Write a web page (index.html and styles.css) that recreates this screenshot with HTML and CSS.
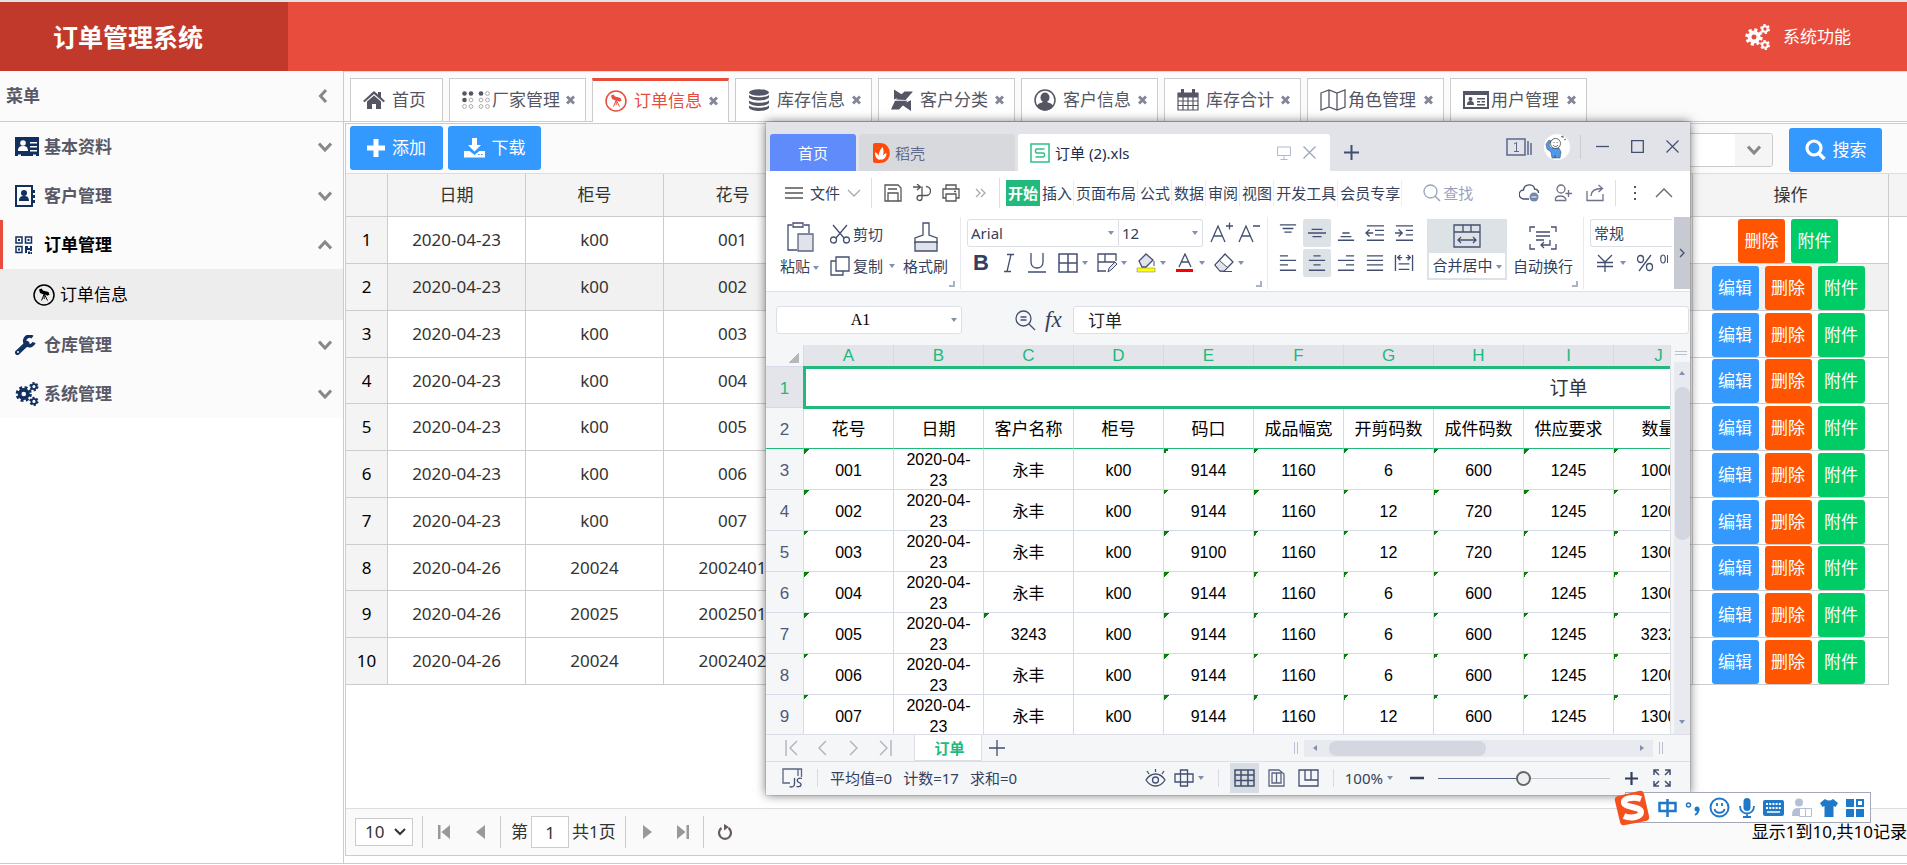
FILE: index.html
```html
<!DOCTYPE html>
<html lang="zh-CN">
<head>
<meta charset="utf-8">
<title>订单管理系统</title>
<link rel="stylesheet" href="styles.css">
</head>
<body>
<svg class="defs" aria-hidden="true">
  <symbol id="gears" viewBox="0 0 24 26">
    <circle cx="8.500" cy="13" r="4.500" fill="none" stroke="currentColor" stroke-width="4"/>
    <circle cx="8.500" cy="13" r="7" fill="none" stroke="currentColor" stroke-width="3.500" stroke-dasharray="3 2.500"/>
    <circle cx="19.500" cy="5" r="2.700" fill="none" stroke="currentColor" stroke-width="2"/>
    <circle cx="19.500" cy="5" r="4" fill="none" stroke="currentColor" stroke-width="2" stroke-dasharray="2.200 2"/>
    <circle cx="19.500" cy="21" r="2.700" fill="none" stroke="currentColor" stroke-width="2"/>
    <circle cx="19.500" cy="21" r="4" fill="none" stroke="currentColor" stroke-width="2" stroke-dasharray="2.200 2"/>
  </symbol>
  <symbol id="chev" viewBox="0 0 14 10"><path d="M1 1.500 7 8 13 1.500" fill="none" stroke="#888" stroke-width="3"/></symbol>
  <symbol id="scope" viewBox="0 0 22 22">
    <circle cx="11" cy="11" r="10" fill="none" stroke="currentColor" stroke-width="1.500"/>
    <path d="M6 5.500 8.500 4.500 10 6.500l5.500 1.500 1 2.500-2 1.200-2-1-2-.2-3.500-1.500z" fill="currentColor"/>
    <path d="M11 10.500 8.500 16.500M11.500 10.500l3 6M11.200 10v5" fill="none" stroke="currentColor"/>
  </symbol>
  <symbol id="close" viewBox="0 0 9 10"><path d="M1 1.500 8 8.500M8 1.500 1 8.500" stroke="#84879a" stroke-width="3"/></symbol>
</svg>
<div class="app">
  <header class="top">
    <h1 class="brand">订单管理系统</h1>
    <button class="sysmenu" type="button"><svg width="25" height="26"><use href="#gears"/></svg>系统功能</button>
  </header>
  <div class="body">
    <aside class="side">
      <div class="side-head">菜单<svg width="10" height="14" viewBox="0 0 10 14"><path d="M8 1 2.500 7 8 13" fill="none" stroke="#888" stroke-width="3"/></svg></div>
      <nav class="menu">
        <a class="item" href="#"><svg width="24" height="20" viewBox="0 0 24 20"><path fill="#12305f" d="M0 0h24v19h-3v-1.500h-3V19H6v-1.500H3V19H0z"/><circle cx="8" cy="6" r="2.800" fill="#fff"/><path fill="#fff" d="M3 14c0-4 2-5 5-5s5 1 5 5zM15 5h7v1.500h-7zM15 9h7v1.500h-7zM15 13h7v1.500h-7z"/></svg><span>基本资料</span><svg class="arr"><use href="#chev"/></svg></a>
        <a class="item" href="#"><svg width="24" height="22" viewBox="0 0 24 22"><path fill="none" stroke="#12305f" stroke-width="2" d="M1 1h16v20H1z"/><circle cx="9" cy="8" r="3" fill="#12305f"/><path fill="#12305f" d="M4 16c0-4 2-5 5-5s5 1 5 5zM18 5h2v3h-2zM18 10h2v3h-2zM18 15h2v3h-2z"/></svg><span>客户管理</span><svg class="arr"><use href="#chev"/></svg></a>
        <a class="item active" href="#"><svg width="24" height="18" viewBox="0 0 24 18"><g fill="none" stroke="#12305f" stroke-width="1.500"><path d="M1 1h6v6H1zM10.500 1h6v6h-6zM1 10.500h6v6H1z"/></g><path fill="#12305f" d="M3 3h2v2H3zM12.500 3h2v2h-2zM3 12.500h2v2H3zM10 10h3v2h2v-2h2v5h-2v-1h-3v3h-2zM13 15.500h2V18h-2zM15.500 16H17v2h-1.500z"/></svg><span>订单管理</span><svg class="arr up"><use href="#chev"/></svg></a>
        <a class="item sub" href="#"><svg width="22" height="22"><use href="#scope"/></svg><span>订单信息</span></a>
        <a class="item" href="#"><svg width="24" height="20" viewBox="0 0 24 20"><path d="M2.500 17.500 12 8.500" stroke="#12305f" stroke-width="5" stroke-linecap="round"/><path d="M17.500 2.200A4.800 4.800 0 1 0 19 7.500" fill="none" stroke="#12305f" stroke-width="3.500"/><circle cx="3" cy="17" r="1" fill="#fff"/></svg><span>仓库管理</span><svg class="arr"><use href="#chev"/></svg></a>
        <a class="item" href="#"><svg class="navy" width="24" height="24"><use href="#gears"/></svg><span>系统管理</span><svg class="arr"><use href="#chev"/></svg></a>
      </nav>
    </aside>
    <main class="main">
      <div class="tabs">
        <a class="tab home" href="#"><svg width="22" height="18" viewBox="0 0 22 18"><path fill="currentColor" d="M11 0 0 10l1.500 1.300L11 3l9.500 8.300L22 10l-4-3.700V1h-3v2.600zM4 10.500 11 4.500l7 6V18h-5v-5H9v5H4z"/></svg>首页</a>
        <a class="tab wide" href="#"><svg width="28" height="18" viewBox="0 0 28 18"><g fill="currentColor"><circle cx="2.500" cy="2.500" r="2.300"/><circle cx="9" cy="2.500" r="2.300"/><circle cx="2.500" cy="9" r="2.300"/><circle cx="19" cy="2.500" r="2.300"/></g><g fill="none" stroke="#aaa"><circle cx="9" cy="9" r="1.900"/><circle cx="2.500" cy="15.500" r="1.900"/><circle cx="9" cy="15.500" r="1.900"/><circle cx="25.500" cy="2.500" r="1.900"/><circle cx="19" cy="9" r="1.900"/><circle cx="25.500" cy="9" r="1.900"/><circle cx="19" cy="15.500" r="1.900"/><circle cx="25.500" cy="15.500" r="1.900"/></g></svg>厂家管理<svg class="x"><use href="#close"/></svg></a>
        <a class="tab on" href="#"><svg width="22" height="22"><use href="#scope"/></svg>订单信息<svg class="x"><use href="#close"/></svg></a>
        <a class="tab" href="#"><svg width="22" height="22" viewBox="0 0 22 22"><g fill="currentColor"><ellipse cx="11" cy="3.500" rx="10" ry="3.300"/><path d="M1 6c3 3 17 3 20 0v2.500c-3 4-17 4-20 0zM1 11.500c3 3 17 3 20 0V14c-3 4-17 4-20 0zM1 16.500c3 3 17 3 20 0V19c-3 4-17 4-20 0z"/></g></svg>库存信息<svg class="x"><use href="#close"/></svg></a>
        <a class="tab" href="#"><svg width="22" height="22" viewBox="0 0 22 22"><path fill="currentColor" d="M3 .5 12.500 6.500 3 10.500zM13.500 2.500H22L14.500 11 5 10.500zM0 20.500 4 11.800 16.500 11.800 8 20.500zM10.500 15.500 20 11.200V22z"/></svg>客户分类<svg class="x"><use href="#close"/></svg></a>
        <a class="tab" href="#"><svg width="22" height="22" viewBox="0 0 22 22"><circle cx="11" cy="11" r="10" fill="none" stroke="currentColor" stroke-width="1.500"/><ellipse cx="11" cy="8.500" rx="4.500" ry="5" fill="currentColor"/><path fill="currentColor" d="M3 17c1-3 4-3 6-4h4c2 1 5 1 6 4-4 6-12 6-16 0z"/></svg>客户信息<svg class="x"><use href="#close"/></svg></a>
        <a class="tab" href="#"><svg width="22" height="22" viewBox="0 0 22 22"><path fill="none" stroke="currentColor" stroke-width="1.200" d="M1 4h20v17H1zM1 12h20M1 16.500h20M6 8v13M11 8v13M16 8v13"/><path fill="currentColor" d="M1 4h20v4.500H1zM4 0h3v6H4zM15 0h3v6h-3z"/></svg>库存合计<svg class="x"><use href="#close"/></svg></a>
        <a class="tab wide" href="#"><svg width="26" height="22" viewBox="0 0 26 22"><path fill="none" stroke="currentColor" stroke-width="1.300" d="M1 4l8-3 8 3 8-3v17l-8 3-8-3-8 3zM9 1v17M17 4v17"/></svg>角色管理<svg class="x"><use href="#close"/></svg></a>
        <a class="tab wide" href="#"><svg width="26" height="18" viewBox="0 0 26 18"><path fill="none" stroke="currentColor" stroke-width="2" d="M1 1h24v16H1z"/><path fill="currentColor" d="M1 1h24v3H1zM4 14c0-3 1-4 3.500-4S11 11 11 14zM14 7h8v1.500h-8zM14 10h3v1.500h-3zM18.500 10H22v1.500h-3.500zM14 13h8v1.500h-8z"/><circle cx="7.500" cy="8" r="2" fill="currentColor"/></svg>用户管理<svg class="x"><use href="#close"/></svg></a>
      </div>
      <section class="panel">
        <div class="tools">
          <button class="btn" type="button"><svg width="18" height="18" viewBox="0 0 18 18"><path d="M9 0v18M0 9h18" stroke="#fff" stroke-width="5"/></svg>添加</button>
          <button class="btn" type="button"><svg width="21" height="20" viewBox="0 0 21 20"><path fill="#fff" d="M8 0h5v7h4l-6.500 6.500L4 7h4zM0 13h5.500l5 4 5-4H21v6.500H0z"/><path d="M14 16.500h1.500M17 16.500h1.500" stroke="#39f"/></svg>下载</button>
          <div class="search">
            <label class="combo"><select aria-label="筛选"><option></option></select><span><svg width="14" height="10"><use href="#chev"/></svg></span></label>
            <button class="btn" type="button"><svg width="21" height="21" viewBox="0 0 21 21"><circle cx="9" cy="9" r="7" fill="none" stroke="#fff" stroke-width="3.200"/><path d="M14 14.500 19.500 20" stroke="#fff" stroke-width="3.500"/></svg>搜索</button>
          </div>
        </div>
        <div class="list">
        <table class="grid">
          <colgroup><col class="c-no"><col class="c-d"><col class="c-d"><col class="c-d"><col><col class="c-op"><col class="c-gut"></colgroup>
          <thead><tr><th></th><th>日期</th><th>柜号</th><th>花号</th><th></th><th>操作</th><th class="gut"></th></tr></thead>
          <tbody>
          <tr><th>1</th><td>2020-04-23</td><td>k00</td><td>001</td><td></td><td class="ops"><button class="del">删除</button><button class="att">附件</button></td></tr>
          <tr class="hover"><th>2</th><td>2020-04-23</td><td>k00</td><td>002</td><td></td><td class="ops"><button class="edit">编辑</button><button class="del">删除</button><button class="att">附件</button></td></tr>
          <tr><th>3</th><td>2020-04-23</td><td>k00</td><td>003</td><td></td><td class="ops"><button class="edit">编辑</button><button class="del">删除</button><button class="att">附件</button></td></tr>
          <tr><th>4</th><td>2020-04-23</td><td>k00</td><td>004</td><td></td><td class="ops"><button class="edit">编辑</button><button class="del">删除</button><button class="att">附件</button></td></tr>
          <tr><th>5</th><td>2020-04-23</td><td>k00</td><td>005</td><td></td><td class="ops"><button class="edit">编辑</button><button class="del">删除</button><button class="att">附件</button></td></tr>
          <tr><th>6</th><td>2020-04-23</td><td>k00</td><td>006</td><td></td><td class="ops"><button class="edit">编辑</button><button class="del">删除</button><button class="att">附件</button></td></tr>
          <tr><th>7</th><td>2020-04-23</td><td>k00</td><td>007</td><td></td><td class="ops"><button class="edit">编辑</button><button class="del">删除</button><button class="att">附件</button></td></tr>
          <tr><th>8</th><td>2020-04-26</td><td>20024</td><td>2002401</td><td></td><td class="ops"><button class="edit">编辑</button><button class="del">删除</button><button class="att">附件</button></td></tr>
          <tr><th>9</th><td>2020-04-26</td><td>20025</td><td>2002501</td><td></td><td class="ops"><button class="edit">编辑</button><button class="del">删除</button><button class="att">附件</button></td></tr>
          <tr><th>10</th><td>2020-04-26</td><td>20024</td><td>2002402</td><td></td><td class="ops"><button class="edit">编辑</button><button class="del">删除</button><button class="att">附件</button></td></tr>
          </tbody>
        </table>
        </div>
        <footer class="pager">
          <label class="size"><select aria-label="每页条数"><option>10</option></select><svg width="12" height="8" viewBox="0 0 12 8"><path d="M1 1l5 5 5-5" fill="none" stroke="#333" stroke-width="2"/></svg></label>
          <i class="r"></i>
          <button type="button" aria-label="首页"><svg width="12" height="14" viewBox="0 0 12 14"><path fill="#999" d="M0 0h2.500v14H0zM12 0v14L3.500 7z"/></svg></button>
          <button type="button" aria-label="上一页"><svg width="12" height="14" viewBox="0 0 12 14"><path fill="#999" d="M11 0v14L2 7z"/></svg></button>
          <i></i>
          <label class="pg">第<input type="text" value="1"></label><span>共1页</span>
          <i class="r"></i>
          <button type="button" aria-label="下一页"><svg width="12" height="14" viewBox="0 0 12 14"><path fill="#999" d="M2 0v14l9-7z"/></svg></button>
          <button type="button" aria-label="末页"><svg width="12" height="14" viewBox="0 0 12 14"><path fill="#999" d="M0 0v14l8.500-7zM9.500 0H12v14H9.500z"/></svg></button>
          <i></i>
          <button type="button" aria-label="刷新"><svg width="16" height="16" viewBox="0 0 16 16"><path d="M4.500 4A6 6 0 1 0 11.500 4" fill="none" stroke="#665c5c" stroke-width="2.200"/><path fill="#665c5c" d="M7 0l5 3-5 3.500z"/></svg></button>
          <span class="total">显示1到10,共10记录</span>
        </footer>
      </section>
    </main>
  </div>

  <div class="win">
    <div class="wtitle">
      <a class="wt whome" href="#">首页</a>
      <a class="wt wdoc" href="#"><svg width="17" height="20" viewBox="0 0 17 20"><path fill="#ff4a0c" d="M2 0h5c13 0 13 20 0 20H2q-2 0-2-2V2q0-2 2-2z"/><path fill="#fff" d="M8 17C4 14 6 8 9.500 4c2 4 1 9-1.500 13zM7 17c-4-1-5-4-5-8 3 2 4.500 4 5 8zM8.500 17c0-3 2-6 5-7 0 4-2 6-5 7z"/></svg>稻壳</a>
      <div class="wt wact"><svg width="20" height="20" viewBox="0 0 20 20"><path fill="#fff" stroke="#2fbf87" stroke-width="1.500" d="M1 1h18v18H1z"/><path d="M14.500 6H7a1.500 1.500 0 0 0-1.500 1.500v1A1.500 1.500 0 0 0 7 10h6a1.500 1.500 0 0 1 1.500 1.500v1A1.500 1.500 0 0 1 13 14H5.500" fill="none" stroke="#2fbf87" stroke-width="1.500"/></svg>订单 (2).xls
        <svg class="push" width="14" height="14" viewBox="0 0 14 14"><path d="M.5 1h13v8.500H.5zM7 10v3M3.500 13.500h7" fill="none" stroke="#b0b9d0"/></svg><svg width="13" height="13" viewBox="0 0 13 13"><path d="M.5.5l12 12M12.500.5l-12 12" stroke="#98a3bd" stroke-width="1.200"/></svg></div>
      <button class="plus" type="button" aria-label="新建"><svg width="15" height="15" viewBox="0 0 15 15"><path d="M7.500 0v15M0 7.500h15" stroke="#434f70" stroke-width="2"/></svg></button>
      <div class="wctl">
        <svg class="wins" width="26" height="18" viewBox="0 0 26 18"><path d="M1 1h18v16H1zM22 3v14M25 5v12" fill="none" stroke="#5b688c" stroke-width="1.500"/><path d="M8 6l2.500-1.500v9M8 13.500h5" fill="none" stroke="#5b688c"/></svg>
        <svg class="ava" width="26" height="26" viewBox="0 0 26 26"><circle cx="13" cy="13" r="13" fill="#fff"/><path d="M8 14h7l2 4-1 6H8l-1-6-4-3-1-5 3-4 2 1-2 4 2 3z" fill="#4f97e8" stroke="#345" stroke-width=".5"/><circle cx="11.500" cy="9.500" r="5" fill="#fff" stroke="#444" stroke-width=".8"/><path d="M9 11c1.500 2 3.500 2 5 0M10 8v1M13 8v1M17 3l2-1v2M20 6l2-1M11 24v-3" fill="none" stroke="#444" stroke-width=".8"/></svg>
        <i></i>
        <button type="button" aria-label="最小化"><svg width="13" height="13" viewBox="0 0 13 13"><path d="M0 6.500h13" stroke="#434f70" stroke-width="1.300"/></svg></button>
        <button type="button" aria-label="最大化"><svg width="13" height="13" viewBox="0 0 13 13"><path d="M.7.700h11.600v11.600H.7z" fill="none" stroke="#434f70" stroke-width="1.300"/></svg></button>
        <button type="button" aria-label="关闭"><svg width="13" height="13" viewBox="0 0 13 13"><path d="M.5.500l12 12M12.500.5l-12 12" stroke="#434f70" stroke-width="1.200"/></svg></button>
      </div>
    </div>
    <div class="wmenu">
      <button class="file" type="button"><svg width="18" height="12" viewBox="0 0 18 12"><path d="M0 1h18M0 6h18M0 11h18" stroke="#555" stroke-width="1.300"/></svg>文件<svg class="fc" width="14" height="8" viewBox="0 0 14 8"><path d="M1 1l6 6 6-6" fill="none" stroke="#aaa" stroke-width="1.300"/></svg></button>
      <i class="v"></i>
      <div class="quick">
        <svg width="18" height="18" viewBox="0 0 18 18"><path d="M1 1h13l3 3v13H1zM4 17V9h10v8M4 5h9" fill="none" stroke="#555" stroke-width="1.300"/></svg>
        <svg width="18" height="18" viewBox="0 0 18 18"><path d="M0 3h7M4 0l3.500 3L4 6M9 11.500h4a4.500 4.500 0 0 0 0-9M9 2.500v12a2.500 2.500 0 1 1-2.500-3H9" fill="none" stroke="#555" stroke-width="1.300"/></svg>
        <svg width="18" height="18" viewBox="0 0 18 18"><path d="M4 5V1h10v4M4 14H1V5h16v9h-3M4 10h10v7H4zM12 7.500h2" fill="none" stroke="#555" stroke-width="1.300"/></svg>
        <svg width="18" height="18" viewBox="0 0 18 18"><path d="M5 5l4 4-4 4M10 5l4 4-4 4" fill="none" stroke="#aaa" stroke-width="1.300"/></svg>
      </div>
      <i class="v"></i>
      <nav class="mt"><a class="sel" href="#">开始</a><a href="#">插入</a><a href="#">页面布局</a><a href="#">公式</a><a href="#">数据</a><a href="#">审阅</a><a href="#">视图</a><a href="#">开发工具</a><a href="#">会员专享</a></nav>
      <button class="find" type="button"><svg width="18" height="18" viewBox="0 0 18 18"><circle cx="7.500" cy="7.500" r="6.500" fill="none" stroke="#98a3bd" stroke-width="1.300"/><path d="M12 12l5 5" stroke="#98a3bd" stroke-width="1.500"/></svg>查找</button>
      <div class="mr">
        <svg width="21" height="18" viewBox="0 0 21 18"><path d="M10 15H5a4.500 4.500 0 0 1-.5-9C5-.5 15-.8 15.500 5c2.500.3 4 2 4 4" fill="none" stroke="#434f70" stroke-width="1.300"/><circle cx="15" cy="13" r="4.500" fill="#7687ad"/><path d="M12.500 13h5" stroke="#fff"/></svg>
        <svg width="18" height="18" viewBox="0 0 18 18"><circle cx="7" cy="5" r="4" fill="none" stroke="#6b7386" stroke-width="1.300"/><path d="M12 16.500H1.500c-2-6 11-6 10.500 0M14.500 6v7M11.500 9.500H18" fill="none" stroke="#6b7386" stroke-width="1.300"/></svg>
        <svg width="18" height="18" viewBox="0 0 18 18"><path d="M1 7v9.500h16V10M5 12c0-5 4-7.500 11-7.500M12.500 1 16.500 4.500 12.500 8" fill="none" stroke="#6b7386" stroke-width="1.300"/></svg>
        <i class="v"></i>
        <svg width="4" height="16" viewBox="0 0 4 16"><path d="M1 1h2v2H1zM1 7h2v2H1zM1 13h2v2H1z" fill="#555"/></svg>
        <svg class="fold" width="18" height="10" viewBox="0 0 18 10"><path d="M1 9l8-8 8 8" fill="none" stroke="#666" stroke-width="1.300"/></svg>
      </div>
    </div>
    <div class="ribbon">
      <div class="g g1">
        <button class="big" type="button"><svg width="28" height="30" viewBox="0 0 28 30"><path d="M6 3H2v25h9M18 3h5v8M7 1h10v4H7z" fill="none" stroke="#434f70" stroke-width="1.300"/><path d="M12 12h15v17H12z" fill="#e0e3ea" stroke="#5b6580" stroke-width="1.300"/></svg><span>粘贴<b class="dd"></b></span></button>
        <div class="stack">
          <button type="button"><svg width="20" height="20" viewBox="0 0 20 20"><path d="M3 1l11 13M17 1 6 14" stroke="#434f70" stroke-width="1.300"/><circle cx="3.500" cy="16" r="3" fill="none" stroke="#434f70" stroke-width="1.300"/><circle cx="16.500" cy="16" r="3" fill="none" stroke="#434f70" stroke-width="1.300"/></svg>剪切</button>
          <button type="button"><svg width="20" height="20" viewBox="0 0 20 20"><path d="M6 5H1v14h12v-4" fill="#fff" stroke="#434f70" stroke-width="1.300"/><path d="M6 1h13v14H6z" fill="#fff" stroke="#434f70" stroke-width="1.300"/></svg>复制<b class="dd"></b></button>
        </div>
        <button class="big brush" type="button"><svg width="24" height="30" viewBox="0 0 24 30"><path d="M9 1h6v12l8 3v5H1v-5l8-3z" fill="#fff" stroke="#434f70" stroke-width="1.300"/><path d="M1 20h22v9H1z" fill="#e0e3ea" stroke="#434f70" stroke-width="1.300"/></svg><span>格式刷</span></button>
        <s class="corner"></s>
      </div>
      <div class="g g2">
        <div class="row">
          <label class="fsel f1"><select aria-label="字体"><option>Arial</option></select><b class="dd"></b></label><label class="fsel f2"><select aria-label="字号"><option>12</option></select><b class="dd"></b></label>
          <svg class="aa" width="24" height="22" viewBox="0 0 24 22"><path d="M1 20 8 4l7 16M3.500 14h9M16 4h7M19.500.5v7" fill="none" stroke="#434f70" stroke-width="1.300"/></svg>
          <svg width="24" height="22" viewBox="0 0 24 22"><path d="M1 20 8 4l7 16M3.500 14h9M15 4h7" fill="none" stroke="#434f70" stroke-width="1.300"/></svg>
        </div>
        <div class="row fmt">
          <button class="b" type="button">B</button>
          <button type="button"><svg width="20" height="20" viewBox="0 0 20 20"><path d="M8 1.500h7M5 18.500h7M12 1.500l-4 17" stroke="#434f70" stroke-width="1.300"/></svg></button>
          <button type="button"><svg width="20" height="20" viewBox="0 0 20 20"><path d="M4 0v9c0 8 12 8 12 0V0M1 19h18" fill="none" stroke="#434f70" stroke-width="1.300"/></svg></button>
          <span class="wide first"><svg width="20" height="20" viewBox="0 0 20 20"><path d="M1 1h18v18H1zM10 1v18M1 10h18" fill="none" stroke="#434f70" stroke-width="1.500"/></svg><b class="dd"></b></span>
          <span class="wide"><svg width="20" height="20" viewBox="0 0 20 20"><path d="M19 8V1H1v18M1 9h17M8 1v8M1 18h8" fill="none" stroke="#434f70" stroke-width="1.300"/><path d="M11 19l1-4 6-6 2 2-6 6z" fill="#e0e3ea" stroke="#434f70"/></svg><b class="dd"></b></span>
          <span class="wide"><svg width="20" height="20" viewBox="0 0 20 20"><path d="M3 8 10 1l7 6-7 7H6z" fill="#e0e3ea" stroke="#434f70" stroke-width="1.300"/><path d="M18 8v5" stroke="#434f70"/><path d="M1 15h18v4H1z" fill="#ff0" stroke="#777" stroke-width=".5"/></svg><b class="dd"></b></span>
          <span class="wide"><svg width="20" height="20" viewBox="0 0 20 20"><path d="M4 14 10 1l6 13M6 9h8" fill="none" stroke="#434f70" stroke-width="1.300"/><path d="M1 16h17v3H1z" fill="red"/></svg><b class="dd"></b></span>
          <span class="wide"><svg width="20" height="20" viewBox="0 0 20 20"><path d="M1 12 11 1l8 8-9 9H6z" fill="#fff" stroke="#434f70" stroke-width="1.300"/><path d="M5.500 7.500l8 7L10 18H6l-5-6z" fill="#e0e3ea" stroke="#434f70"/><path d="M9 18.500h9" stroke="#434f70"/></svg><b class="dd"></b></span>
        </div>
        <s class="corner"></s>
      </div>
      <div class="g g3">
        <div class="al">
          <button type="button"><svg viewBox="0 0 20 20"><path d="M1 1h18M4 5h12M6 9h8"/></svg></button>
          <button class="p" type="button"><svg viewBox="0 0 20 20"><path d="M4 6h12M0 10h20M5 14h10"/></svg></button>
          <button type="button"><svg viewBox="0 0 20 20"><path d="M6 10h8M4 14h12M1 18h18"/></svg></button>
          <button type="button"><svg viewBox="0 0 20 20"><path d="M1 2h19M10 7h10M10 12h10M1 18h19M8 10H0M4 6l-4 4 4 4"/></svg></button>
          <button type="button"><svg viewBox="0 0 20 20"><path d="M1 2h19M12 7h8M12 12h8M1 18h19M0 10h8M4 6l4 4-4 4"/></svg></button>
          <button type="button"><svg viewBox="0 0 20 20"><path d="M1 2h9M1 7h18M1 12h9M1 18h18"/></svg></button>
          <button class="p" type="button"><svg viewBox="0 0 20 20"><path d="M6 2h8M1 7h18M6 12h8M1 18h18"/></svg></button>
          <button type="button"><svg viewBox="0 0 20 20"><path d="M10 2h9M1 7h18M10 12h9M1 18h18"/></svg></button>
          <button type="button"><svg viewBox="0 0 20 20"><path d="M1 2h18M1 7h18M1 12h18M1 18h18"/></svg></button>
          <button type="button"><svg viewBox="0 0 20 20"><path d="M.5 1v18M19.500 1v18M3 4h5M6 1 3 4l3 3M12 4h5M14 1l3 3-3 3M4 11h12M4 17h12"/></svg></button>
        </div>
        <button class="merge" type="button"><span class="mi"><svg width="28" height="24" viewBox="0 0 28 24"><path d="M1 1h26v22H1zM1 8h26M10 1v7M18 1v7M5 16h18M8 13l-3 3 3 3M20 13l3 3-3 3" fill="none" stroke="#434f70" stroke-width="1.300"/></svg></span><span class="ml">合并居中<b class="dd"></b></span></button>
        <button class="wrap" type="button"><svg width="28" height="24" viewBox="0 0 28 24"><path d="M1 6V1h5M22 1h5v5M1 18v5h5M22 23h5v-5M7 6h14M7 10h14M7 14h8M21 14v5h-9M15 16l-3 3 3 3" fill="none" stroke="#434f70" stroke-width="1.300"/></svg><span>自动换行</span></button>
        <s class="corner"></s>
      </div>
      <div class="g4">
        <label class="nsel"><select aria-label="数字格式"><option>常规</option></select></label>
        <div class="num"><svg width="18" height="18" viewBox="0 0 18 18"><path d="M2 1l7 7 7-7M9 8v10M1 8.500h16M1 12.500h16" fill="none" stroke="#434f70" stroke-width="1.300"/></svg><b class="dd"></b><svg class="pc" width="18" height="18" viewBox="0 0 18 18"><ellipse cx="4.500" cy="5" rx="3" ry="3.500" fill="none" stroke="#434f70" stroke-width="1.300"/><ellipse cx="13.500" cy="13" rx="3" ry="3.500" fill="none" stroke="#434f70" stroke-width="1.300"/><path d="M15 1 3 17" stroke="#434f70" stroke-width="1.300"/></svg><svg width="8" height="18" viewBox="0 0 8 18"><ellipse cx="3" cy="5" rx="2.300" ry="4" fill="none" stroke="#434f70" stroke-width="1.200"/><path d="M7.500 1v8" stroke="#434f70"/></svg></div>
      </div>
      <button class="more" type="button" aria-label="更多"><svg width="6" height="10" viewBox="0 0 6 10"><path d="M1 1l4 4-4 4" fill="none" stroke="#434f70" stroke-width="1.300"/></svg></button>
    </div>
    <div class="fx">
      <div class="name"><input type="text" value="A1" aria-label="名称框"><b class="dd"></b></div>
      <svg class="fi" width="21" height="21" viewBox="0 0 21 21"><circle cx="8.500" cy="8.500" r="7.500" fill="none" stroke="#434f70" stroke-width="1.300"/><path d="M14 14l6 6M5.500 7h6M5.500 10h6" stroke="#434f70" stroke-width="1.300"/></svg>
      <em>fx</em>
      <input class="formula" type="text" value="订单" aria-label="编辑栏">
    </div>
    <div class="sheet">
      <div class="cells">
        <table class="xl">
          <colgroup><col class="rh"><col span="17"></colgroup>
          <thead><tr><th class="cor"></th><th>A</th><th>B</th><th>C</th><th>D</th><th>E</th><th>F</th><th>G</th><th>H</th><th>I</th><th>J</th></tr></thead>
          <tbody>
          <tr class="r1"><th>1</th><td colspan="17">订单</td></tr>
          <tr class="r2"><th>2</th><td>花号</td><td>日期</td><td>客户名称</td><td>柜号</td><td>码口</td><td>成品幅宽</td><td>开剪码数</td><td>成件码数</td><td>供应要求</td><td>数量</td></tr>
          <tr><th>3</th><td class="e">001</td><td><div>2020-04-23</div></td><td>永丰</td><td>k00</td><td class="e">9144</td><td class="e">1160</td><td class="e">6</td><td class="e">600</td><td class="e">1245</td><td class="e">1000</td></tr>
          <tr><th>4</th><td class="e">002</td><td><div>2020-04-23</div></td><td>永丰</td><td>k00</td><td class="e">9144</td><td class="e">1160</td><td class="e">12</td><td class="e">720</td><td class="e">1245</td><td class="e">1200</td></tr>
          <tr><th>5</th><td class="e">003</td><td><div>2020-04-23</div></td><td>永丰</td><td>k00</td><td class="e">9100</td><td class="e">1160</td><td class="e">12</td><td class="e">720</td><td class="e">1245</td><td class="e">1300</td></tr>
          <tr><th>6</th><td class="e">004</td><td><div>2020-04-23</div></td><td>永丰</td><td>k00</td><td class="e">9144</td><td class="e">1160</td><td class="e">6</td><td class="e">600</td><td class="e">1245</td><td class="e">1300</td></tr>
          <tr><th>7</th><td class="e">005</td><td><div>2020-04-23</div></td><td class="e">3243</td><td>k00</td><td class="e">9144</td><td class="e">1160</td><td class="e">6</td><td class="e">600</td><td class="e">1245</td><td class="e">3232</td></tr>
          <tr><th>8</th><td class="e">006</td><td><div>2020-04-23</div></td><td>永丰</td><td>k00</td><td class="e">9144</td><td class="e">1160</td><td class="e">6</td><td class="e">600</td><td class="e">1245</td><td class="e">1200</td></tr>
          <tr><th>9</th><td class="e">007</td><td><div>2020-04-23</div></td><td>永丰</td><td>k00</td><td class="e">9144</td><td class="e">1160</td><td class="e">12</td><td class="e">600</td><td class="e">1245</td><td class="e">1300</td></tr>
          </tbody>
        </table>
      </div>
      <div class="vs"><u></u><div class="vtrack"><b class="dd up"></b><div class="vthumb"></div><b class="dd end"></b></div></div>
    </div>
    <div class="sbar">
      <svg class="nav" width="108" height="16" viewBox="0 0 108 16"><path d="M1 0v16M12 1 5 8l7 7M41 1l-7 7 7 7M65 1l7 7-7 7M95 1l7 7-7 7M106 0v16" fill="none" stroke="#aaaeb6" stroke-width="1.300"/></svg>
      <a class="stab" href="#">订单</a>
      <svg width="16" height="16" viewBox="0 0 16 16"><path d="M8 0v16M0 8h16" stroke="#434f70" stroke-width="1.300"/></svg>
      <div class="hs"><u></u><div class="htrack"><b class="dd left"></b><div class="hthumb"></div><b class="dd right"></b></div><u></u></div>
    </div>
    <div class="stat">
      <svg width="21" height="20" viewBox="0 0 21 20"><path d="M8 15H1V1h15v7M16 1h3.500v8" fill="none" stroke="#5b6580" stroke-width="1.300"/><path d="M12.500 10v6c0 3-3 3.500-5 2.500M20 10.500c-5-1.500-6 3-3 4s3 5-2.500 4" fill="none" stroke="#434f70" stroke-width="1.300"/></svg>
      <i></i>
      <span class="sum"><span>平均值=0</span><span>计数=17</span><span>求和=0</span></span>
      <div class="sr">
        <svg width="21" height="18" viewBox="0 0 21 18"><path d="M1 11c5-8 14-8 19 0-5 8-14 8-19 0zM10.500 0v3M2 2l2 3M19 2l-2 3" fill="none" stroke="#434f70" stroke-width="1.300"/><circle cx="10.500" cy="11" r="3" fill="none" stroke="#434f70" stroke-width="1.300"/></svg>
        <svg class="m8" width="20" height="18" viewBox="0 0 20 18"><path d="M1 5h18v8H1zM6.500 1h7v16h-7z" fill="none" stroke="#434f70" stroke-width="1.300"/></svg><b class="dd"></b>
        <i></i>
        <span class="pv"><svg width="21" height="18" viewBox="0 0 21 18"><path d="M1 1h19v16H1zM1 6h19M1 11.500h19M7 1v16M14 1v16" fill="none" stroke="#434f70" stroke-width="1.500"/></svg></span>
        <svg class="m9" width="17" height="18" viewBox="0 0 17 18"><path d="M1 1h10l5 4v12H1zM4 4h4.500v10H4zM8.500 4H13v10H8.500" fill="none" stroke="#5b6580" stroke-width="1.300"/></svg>
        <svg class="m13" width="21" height="18" viewBox="0 0 21 18"><path d="M1 1h19v16H1zM7 1v10h13M13 1v10" fill="none" stroke="#434f70" stroke-width="1.300"/></svg>
        <i class="i2"></i>
        <span class="zoom">100%</span><b class="dd"></b>
        <svg class="mn" width="14" height="14" viewBox="0 0 14 14"><path d="M0 7h14" stroke="#333f5c" stroke-width="2.500"/></svg>
        <input type="range" min="0" max="200" value="99" aria-label="缩放">
        <svg class="mp" width="13" height="13" viewBox="0 0 13 13"><path d="M6.500 0v13M0 6.500h13" stroke="#333f5c" stroke-width="2.200"/></svg>
        <svg class="mp" width="18" height="18" viewBox="0 0 18 18"><path d="M1 6V1h5M1 1l5 5M12 1h5v5M17 1l-5 5M1 12v5h5M1 17l5-5M17 12v5h-5M17 17l-5-5" fill="none" stroke="#434f70" stroke-width="1.500"/></svg>
      </div>
    </div>
  </div>

  <div class="ime">
    <svg class="logo" width="36" height="36" viewBox="0 0 36 36"><path d="M4 6 25 1q4-1 5 3l5 22q1 4-3 5L11 35q-4 1-5-3L1 11q-1-4 3-5z" fill="#f4511e"/><path d="M27 9C18 6 9 9 10 13c1 5 17 3 17 9 0 5-10 7-17 4" fill="none" stroke="#fff" stroke-width="6"/></svg>
    <svg width="19" height="20" viewBox="0 0 19 20"><path d="M1.500 5h16v8h-16zM9.500 1v18" fill="none" stroke="#1f78c8" stroke-width="2.500"/></svg>
    <svg width="16" height="20" viewBox="0 0 16 20"><circle cx="3.500" cy="7" r="2" fill="none" stroke="#1f78c8" stroke-width="1.500"/><circle cx="12" cy="11" r="2.500" fill="#1f78c8"/><path d="M13.500 11q0 4-3.500 6" fill="none" stroke="#1f78c8" stroke-width="2"/></svg>
    <svg width="21" height="21" viewBox="0 0 21 21"><circle cx="10.500" cy="10.500" r="9" fill="none" stroke="#1f78c8" stroke-width="2"/><path d="M5.500 12c1 5 9 5 10 0M8 6v3M13 6v3" fill="none" stroke="#1f78c8" stroke-width="1.800"/></svg>
    <svg width="16" height="20" viewBox="0 0 16 20"><rect x="4.500" width="7" height="13" rx="3.500" fill="#1f78c8"/><path d="M1 8c0 10 14 10 14 0M8 15v4M4 19h8" fill="none" stroke="#1f78c8" stroke-width="1.800"/></svg>
    <svg width="21" height="16" viewBox="0 0 21 16"><rect width="21" height="16" rx="2" fill="#1f78c8"/><path d="M3 4h15M3 8h15" stroke="#fff" stroke-width="2" stroke-dasharray="2 1.200"/><path d="M4 12h13" stroke="#fff" stroke-width="1.500"/></svg>
    <svg width="20" height="20" viewBox="0 0 20 20"><circle cx="7" cy="4.500" r="4" fill="#b4bfd6"/><path d="M0 18c0-7 2-8 7-8s6 2 6 2v6z" fill="#b4bfd6"/><path d="M7.500 10.500h12v8h-12zM13.500 10.500v8" fill="#fff" stroke="#b4bfd6"/></svg>
    <svg width="18" height="18" viewBox="0 0 18 18"><path fill="#1f78c8" d="M5 0q4 3 8 0l5 4-2.500 4-2-1v11h-9V7l-2 1L0 4z"/></svg>
    <svg width="18" height="18" viewBox="0 0 18 18"><path fill="#1f78c8" d="M0 0h8v8H0zM0 10h8v8H0zM10 10h8v8h-8z"/><path d="M11 1h6v6h-6z" fill="none" stroke="#1f78c8" stroke-width="2"/></svg>
  </div>
</div>
</body>
</html>
```
FILE: styles.css
```css
* { box-sizing: border-box; }
body {
  margin: 0;
  font: 17px/24px "Noto Sans", "Noto Sans CJK SC", sans-serif;
  color: #333;
  background: #fff;
  overflow: hidden;
}
a { color: inherit; text-decoration: none; }
button { font: inherit; color: inherit; border: 0; background: none; padding: 0; white-space: nowrap; }
select, input { font: inherit; color: inherit; }
select { appearance: none; }
svg { flex: none; display: block; }
.defs { position: absolute; width: 0; height: 0; }

.app {
  position: relative;
  display: flex;
  flex-direction: column;
  height: 100vh;
  border-top: 2px solid #e2e2e2;
}
.top { display: flex; flex: none; height: 69px; background: #e84c3d; color: #fff; }
.brand {
  width: 288px;
  margin: 0;
  padding-left: 53px;
  background: #c1392b;
  font-size: 25px;
  line-height: 70px;
  font-weight: 700;
}
.sysmenu { display: flex; align-items: center; gap: 13px; margin-left: auto; padding-right: 56px; }
.body { display: flex; flex: 1; min-height: 0; margin-bottom: 1px; border-bottom: 1px solid #ccc; }

/* sidebar */
.side { width: 344px; flex: none; border-right: 1px solid #ccc; }
.side-head {
  display: flex;
  align-items: center;
  justify-content: space-between;
  height: 51px;
  padding: 0 15px 0 6px;
  border-bottom: 1px solid #ccc;
  background: #fbfbfb;
  color: #585866;
  font-weight: 700;
}
.menu { background: #fbfbfb; }
.item {
  display: flex;
  align-items: center;
  height: 49px;
  padding: 0 11px 0 12px;
  gap: 5px;
  border-left: 3px solid transparent;
  color: #585866;
  font-weight: 700;
}
.item.active { border-color: #e84c3d; color: #000; }
.item.sub { height: 51px; padding-left: 30px; background: #ededed; color: #000; font-weight: 400; }
.navy { color: #12305f; }
.arr { width: 14px; height: 10px; margin-left: auto; }
.arr.up { transform: rotate(180deg); }

/* tabs */
.main { display: flex; flex-direction: column; flex: 1; min-width: 0; border-top: 1px solid #ddd; }
.tabs {
  display: flex;
  flex: none;
  gap: 6px;
  height: 50px;
  padding: 6px 6px 0;
  border-bottom: 1px solid #ccc;
  background: #fbfbfb;
}
.tab {
  display: flex;
  align-items: center;
  gap: 7px;
  width: 137px;
  padding: 0 10px 0 12px;
  border: 1px solid #ccc;
  border-bottom: 0;
  background: #fff;
  color: #555664;
  white-space: nowrap;
}
.tab.home { width: 93px; }
.tab.wide { gap: 2px; }
.tab.on { border-top: 3px solid #e84c3d; color: #e84c3d; margin-bottom: -1px; padding-bottom: 2px; }
.tab .x { width: 9px; height: 10px; margin-left: auto; }

/* content panel */
.panel {
  display: flex;
  flex-direction: column;
  flex: 1;
  min-height: 0;
  margin: 1px 0 7px 1px;
  border: 1px solid #ccc;
  border-right: 0;
}
.tools { display: flex; flex: none; gap: 5px; height: 50px; padding: 2px 4px; border-bottom: 1px solid #ddd; background: #fbfbfb; }
.btn {
  display: flex;
  align-items: center;
  justify-content: center;
  gap: 7px;
  width: 93px;
  height: 44px;
  border-radius: 3px;
  background: #39f;
  color: #fff;
}
.search { display: flex; align-items: center; gap: 16px; margin-left: auto; padding: 2px 21px 0 0; }
.combo { display: flex; width: 260px; height: 34px; border: 1px solid #ccc; border-radius: 3px; background: #fff; overflow: hidden; }
.combo select { flex: 1; border: 0; background: none; }
.combo span { display: flex; align-items: center; justify-content: center; width: 37px; background: #f5f5f5; }
.list { flex: 1; min-height: 0; }
.grid { width: 100%; table-layout: fixed; border-spacing: 0; text-align: center; }
.c-no { width: 42px; }
.c-d { width: 138px; }
.c-op { width: 196px; }
.c-gut { width: 18px; }
.grid th, .grid td { padding: 0; border: solid #ccc; border-width: 0 1px 1px 0; font-weight: 400; }
.grid th { background: #f4f4f4; }
.grid thead th { height: 43px; }
.grid thead .gut { border-right: 0; }
.grid tbody th { color: #000; }
.grid tbody tr { height: 47px; }
.grid tbody tr:nth-child(4n) { height: 46px; }
.grid .hover td { background: #f1f1f1; }
.grid .ops { padding: 1px 5px 0 0; line-height: 0; }
.ops button { width: 47px; height: 44px; margin: 0 3px; border-radius: 3px; color: #fff; line-height: 24px; }
.edit { background: #39f; }
.del { background: #f50; }
.att { background: #0c6; }

.pager { display: flex; align-items: center; flex: none; height: 47px; padding-left: 9px; border-top: 1px solid #ddd; background: #fafafa; }
.size { position: relative; }
.size select { display: block; width: 58px; height: 28px; padding: 0 9px; border: 1px solid #ccc; background: #fff; line-height: 24px; }
.size svg { position: absolute; right: 7px; top: 10px; pointer-events: none; }
.pager i { width: 1px; height: 32px; margin: 0 3px 0 2px; background: #ccc; }
.pager .r { margin-left: 9px; }
.pager button { display: flex; justify-content: center; align-items: center; width: 36px; height: 32px; }
.pg { display: flex; align-items: center; gap: 3px; margin: 0 3px 0 7px; }
.pg input { width: 38px; height: 32px; padding: 0; border: 1px solid #ccc; background: #fff; text-align: center; }
.total { margin-left: auto; color: #000; }

/* spreadsheet window */
.win {
  position: absolute;
  left: 766px;
  top: 120px;
  display: flex;
  flex-direction: column;
  width: 924px;
  height: 673px;
  background: #f5f6f8;
  box-shadow: 0 0 10px rgba(0, 0, 0, .55), 0 0 1px #777;
  color: #333f5c;
  font-size: 15px;
  line-height: 20px;
}
.wtitle { display: flex; align-items: flex-end; height: 49px; padding-left: 4px; background: #e2e3e8; }
.wt { display: flex; align-items: center; gap: 5px; height: 37px; margin-right: 3px; border-radius: 3px 3px 0 0; white-space: nowrap; }
.whome { justify-content: center; width: 86px; background: #608cfb; color: #fff; }
.wdoc { width: 156px; padding-left: 14px; background: #d8d9dd; color: #5f6b8a; }
.wact { width: 312px; padding: 0 14px 0 12px; background: #fff; color: #222b45; }
.push { margin: 0 7px 0 auto; }
.plus { margin: 0 0 11px 11px; }
.wctl { display: flex; align-items: center; align-self: center; margin-left: auto; }
.wctl button { display: flex; justify-content: center; width: 35px; }
.wins { margin-right: 12px; }
.ava { margin-right: 10px; }
.wctl i { width: 1px; height: 24px; margin-right: 4px; background: #c9cbd3; }

.wmenu { display: flex; align-items: center; height: 44px; padding: 0 17px 0 19px; background: #fff; white-space: nowrap; }
.file { display: flex; align-items: center; gap: 7px; }
.v { width: 1px; height: 30px; margin-left: 10px; background: #dcdfe6; }
.quick { display: flex; gap: 11px; margin-left: 12px; }
.mt { display: flex; margin-left: 6px; }
.mt a { padding: 3px 1px 3px 2px; border-right: 1px solid #eceef2; }
.mt .sel { padding-right: 2px; border: 0; background: #21b97c; color: #fff; font-weight: 700; }
.find { display: flex; align-items: center; gap: 2px; margin-left: 21px; color: #98a3bd; }
.mr { display: flex; align-items: center; gap: 14px; margin-left: auto; }
.mr .v { height: 26px; margin: 0 3px 0 -3px; }
.fold { margin-left: 4px; }

.ribbon { display: flex; height: 77px; padding-top: 2px; border-bottom: 1px solid #dfe1e6; background: #fff; }
.g { position: relative; display: flex; height: 72px; padding-top: 2px; border-right: 1px solid #e8eaee; }
.corner { position: absolute; right: 5px; bottom: 2px; width: 6px; height: 6px; border: solid #a9b2c6; border-width: 0 2px 2px 0; }
.dd { display: inline-block; flex: none; width: 0; height: 0; border: 3px solid transparent; border-top: 4px solid #8290b0; border-bottom: 0; vertical-align: middle; margin-left: 3px; }
.g1 { width: 195px; padding-left: 14px; }
.big { display: flex; flex-direction: column; align-items: center; gap: 4px; height: 58px; padding-top: 3px; }
.brush { margin-left: 7px; }
.stack { display: flex; flex-direction: column; gap: 2px; width: 66px; margin-left: 11px; }
.stack button { display: flex; align-items: center; gap: 3px; height: 30px; }
.g2 { flex-direction: column; gap: 2px; width: 307px; padding-left: 6px; }
.row { display: flex; align-items: center; height: 28px; }
.fsel { display: flex; align-items: center; height: 28px; padding-right: 4px; border: 1px solid #dcdfe6; }
.fsel select, .nsel select { flex: 1; min-width: 0; padding: 0 3px; border: 0; background: none; }
.f1 { width: 152px; border-radius: 3px 0 0 3px; }
.f2 { width: 84px; border-left: 0; border-radius: 0 3px 3px 0; }
.aa { margin: 0 4px 0 7px; }
.fmt button { display: flex; justify-content: center; width: 28px; }
.fmt .b { font: 700 22px/28px "Liberation Sans", sans-serif; }
.fmt .wide { display: flex; align-items: center; gap: 1px; width: 39px; }
.fmt .first { margin-left: 7px; }
.g3 { width: 316px; padding-left: 6px; }
.al { display: grid; grid-template-columns: repeat(5, 28px); grid-auto-rows: 28px; gap: 2px 1px; }
.al button { display: flex; align-items: center; justify-content: center; border-radius: 2px; }
.al svg { width: 20px; height: 18px; fill: none; stroke: #434f70; stroke-width: 1.500; }
.al .p { background: #dde2e6; }
.merge { width: 80px; height: 61px; margin-left: 9px; padding: 0 2px 2px; background: #dde2e6; }
.mi { display: flex; justify-content: center; align-items: center; height: 34px; }
.ml { display: block; height: 25px; background: #fff; line-height: 24px; }
.wrap { display: flex; flex-direction: column; align-items: center; gap: 6px; height: 58px; margin-left: 6px; padding-top: 7px; }
.g4 { flex: 1; padding: 2px 0 0 6px; min-width: 0; overflow: hidden; }
.nsel { display: flex; height: 28px; margin-right: 2px; border: 1px solid #dcdfe6; border-right: 0; border-radius: 3px 0 0 3px; }
.num { display: flex; align-items: center; height: 32px; padding-left: 6px; gap: 3px; }
.pc { margin: 0 3px 0 7px; }
.more { display: flex; align-items: center; justify-content: center; width: 16px; height: 72px; background: #c8cad1; }

.fx { display: flex; align-items: center; height: 53px; padding: 3px 1px 0 10px; }
.name { display: flex; align-items: center; width: 186px; height: 28px; padding-right: 4px; border: 1px solid #dcdfe6; border-radius: 3px; background: #fff; }
.name input { flex: 1; min-width: 0; padding: 0 4px 0 0; border: 0; background: none; color: #000; font: 400 16px/24px "Liberation Serif", serif; text-align: center; }
.fi { margin: 0 9px 0 53px; }
.fx em { width: 28px; font: italic 23px/24px "Liberation Serif", serif; }
.formula { flex: 1; min-width: 0; height: 28px; padding: 0 14px 2px; border: 1px solid #dcdfe6; border-radius: 3px; background: #fff; color: #222; font: 17px/24px "Liberation Serif", "Noto Sans CJK SC", serif; }

.sheet { display: flex; flex: 1; min-height: 0; overflow: hidden; }
.cells { flex: 1; min-width: 0; overflow: hidden; background: #fff; }
.xl { width: 1568px; table-layout: fixed; border-spacing: 0; color: #000; text-align: center; font: 16px/22px "Liberation Sans", "Noto Sans CJK SC", sans-serif; }
.xl .rh { width: 38px; }
.xl th, .xl td { height: 41px; padding: 3px 0 0; border: solid #d4dae6; border-width: 0 1px 1px 0; font-weight: 400; }
.xl th { background: #f5f6f8; color: #4d5a7a; font-size: 17px; }
.xl thead th { height: 22px; padding: 1px 0 0; line-height: 20px; background: #e4e5ea; color: #21b97c; }
.xl thead .cor { background: linear-gradient(135deg, transparent 50%, #b5b7bb 50%) 22px 7px / 11px 11px no-repeat #f5f6f8; }
.xl .r1 th { background: #e4e5ea; color: #21b97c; }
.xl .r1 td { outline: 3px solid #21b97c; outline-offset: -2px; color: #333; font-size: 19px; }
.xl .r2 th, .xl .r2 td { border-bottom-color: #21b97c; }
.xl .r2 td { font-size: 17px; }
.xl .e { background: linear-gradient(135deg, #087f08 50%, transparent 50%) 0 0 / 5px 5px no-repeat; }
.xl div { height: 40px; margin-top: -4px; padding: 0 8px; line-height: 21px; }
.vs { display: flex; flex-direction: column; width: 20px; padding-left: 3px; border-left: 1px solid #dcdfe6; }
.vs u { height: 4px; margin: 6px 3px 7px 1px; border: solid #b9c1d3; border-width: 1px 0; }
.vtrack { display: flex; flex: 1; flex-direction: column; align-items: center; background: #e9eaef; }
.vtrack .dd { margin: 9px 0 12px; }
.dd.up { transform: rotate(180deg); }
.vtrack .end { margin: auto 0 10px; }
.vthumb { width: 15px; height: 153px; border-radius: 7px; background: #d4d7df; }

.sbar { display: flex; align-items: center; height: 27px; padding-left: 19px; border-top: 1px solid #dcdfe6; background: #f5f6f8; }
.stab { width: 68px; height: 26px; margin: 0 7px 0 21px; padding-left: 3px; border: solid #dcdfe6; border-width: 0 1px 1px; background: #fff; color: #21b97c; font-weight: 700; line-height: 26px; text-align: center; }
.hs { display: flex; align-items: center; gap: 6px; margin-left: auto; padding-right: 27px; }
.hs u { width: 4px; height: 12px; border: solid #b9c1d3; border-width: 0 1px; }
.htrack { display: flex; align-items: center; width: 349px; height: 17px; background: #e9eaef; }
.hthumb { width: 157px; height: 15px; border-radius: 7px; background: #d4d7df; }
.dd.left { margin: 0 11px 0 8px; transform: rotate(90deg); }
.dd.right { margin: 0 8px 0 auto; transform: rotate(-90deg); }

.stat { display: flex; align-items: center; height: 34px; padding: 0 19px 1px 16px; border-top: 1px solid #dcdfe6; white-space: nowrap; }
.stat i { width: 1px; height: 18px; margin: 0 12px 0 14px; background: #d8dbe3; }
.sum { display: flex; gap: 11px; }
.sr { display: flex; align-items: center; margin-left: auto; }
.m8 { margin-left: 8px; }
.sr i { margin-right: 11px; }
.sr .dd { margin-left: 4px; }
.pv { display: flex; align-items: center; justify-content: center; width: 29px; height: 30px; background: #d8dde4; }
.m9 { margin-left: 9px; }
.m13 { margin-left: 13px; }
.mn { margin: 0 14px 0 17px; }
.mp { margin-left: 15px; }
.sr input { appearance: none; width: 172px; height: 16px; margin: 0; background: linear-gradient(#56638a, #56638a) 0 50% / 50% 1px no-repeat, linear-gradient(#c3c7d1, #c3c7d1) 0 50% / 100% 1px no-repeat; }
.sr input::-webkit-slider-thumb { appearance: none; width: 15px; height: 15px; border: 2px solid #666; border-radius: 50%; background: #eee; }

.ime {
  position: absolute;
  left: 1625px;
  top: 790px;
  display: flex;
  align-items: center;
  justify-content: space-between;
  width: 246px;
  height: 31px;
  padding-right: 6px;
  border: 1px solid #a5a8b8;
  background: #fff;
}
.logo { margin-left: -12px; }
```
